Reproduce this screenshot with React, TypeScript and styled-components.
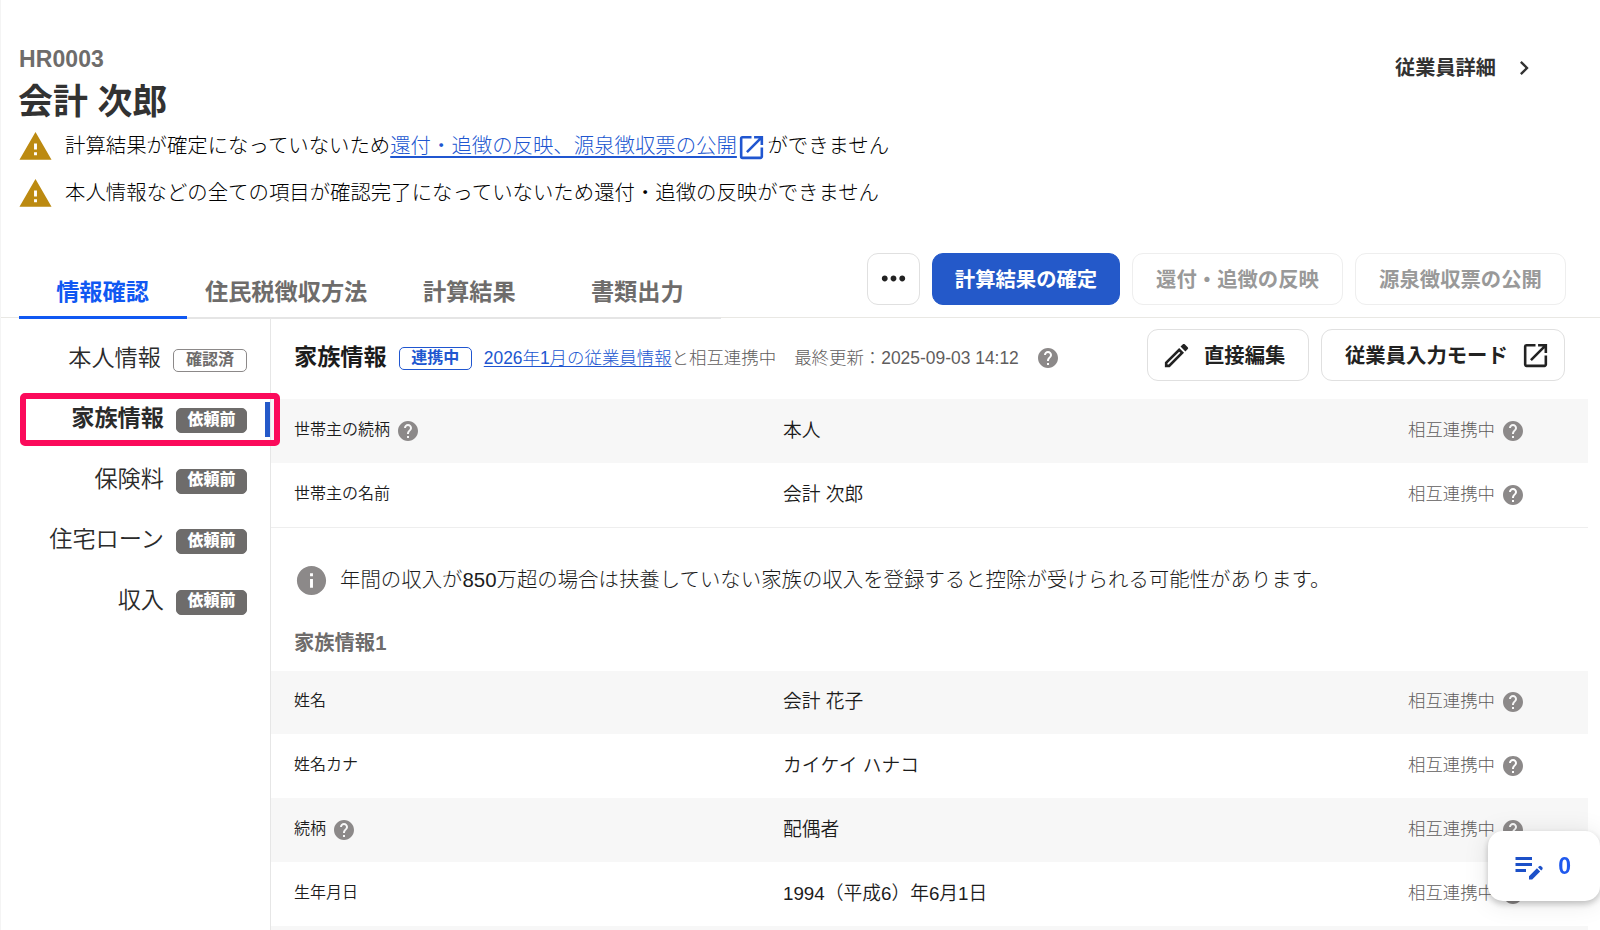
import React from "react";
import styled, { createGlobalStyle, css } from "styled-components";
import {
  MdChevronRight,
  MdEditNote,
  MdHelp,
  MdInfo,
  MdMoreHoriz,
  MdOpenInNew,
  MdOutlineEdit,
  MdWarning,
} from "react-icons/md";

const GlobalStyle = createGlobalStyle`
  *, *::before, *::after { box-sizing: border-box; }
  html, body { margin: 0; padding: 0; background: #fff; }
  body {
    font-family: "Liberation Sans", "Noto Sans CJK JP", sans-serif;
    color: #1c1c1c;
    overflow: hidden;
  }
  svg { display: block; flex-shrink: 0; }
`;

const Page = styled.div`
  width: 1600px;
  height: 930px;
  overflow: hidden;
  display: flex;
  flex-direction: column;
  border-left: 1px solid #f4f4f4;
`;

const Header = styled.header`
  height: 253px;
  flex-shrink: 0;
  padding: 45px 62px 0 18px;
  display: flex;
  justify-content: space-between;
  align-items: flex-start;
`;

const EmployeeCode = styled.div`
  font-size: 23px;
  line-height: 28px;
  font-weight: 700;
  letter-spacing: 0.1px;
  color: #6e6c6b;
`;

const EmployeeName = styled.h1`
  margin: 7px 0 0 -1px;
  font-size: 34.9px;
  line-height: 44px;
  font-weight: 700;
  color: #323232;
`;

const Alerts = styled.div`
  margin-top: -3px;
`;

const Alert = styled.div`
  display: flex;
  align-items: center;
  height: 47px;
  padding-bottom: 1px;
  font-size: 20.4px;
  font-weight: 300;
  color: #000;
  white-space: nowrap;
`;

const AlertIcon = styled(MdWarning)`
  margin: 4px 12px 0 -1px;
  color: #bc8a11;
`;

const Link = styled.a`
  color: #2056d0;
  text-decoration: underline;
  text-underline-offset: 3px;
`;

const AlertLink = styled(Link)`
  text-decoration-thickness: 2px;
`;

const LinkIcon = styled(MdOpenInNew)`
  margin: 6px 0 0 -0.5px;
  color: #2056d0;
`;

const DetailLink = styled.a`
  margin-top: 9px;
  display: flex;
  align-items: center;
  gap: 14px;
  font-size: 20.2px;
  line-height: 29px;
  font-weight: 700;
  color: #323232;
  svg { margin-top: -2px; }
`;

const TabBar = styled.div`
  height: 65px;
  flex-shrink: 0;
  padding: 0 34px 0 18px;
  display: flex;
  justify-content: space-between;
  align-items: flex-start;
  border-bottom: 1px solid #e9e8e4;
`;

const Tabs = styled.nav`
  display: flex;
  height: 66px;
  border-bottom: 2px solid #e5e5e5;
`;

const Tab = styled.div<{ $active?: boolean }>`
  min-width: 168px;
  height: 66px;
  padding: ${(p) => (p.$active ? "24px 18.5px 0 17.5px" : "24px 18px 0")};
  text-align: center;
  font-size: 23.2px;
  line-height: 30px;
  font-weight: 700;
  white-space: nowrap;
  color: ${(p) => (p.$active ? "#1058f2" : "#6e6c6b")};
  border-bottom: ${(p) => (p.$active ? "3px solid #1058f2" : "none")};
`;

const Actions = styled.div`
  display: flex;
  gap: 12px;
`;

const Button = styled.button<{ $variant?: "primary" | "disabled"; $width: number }>`
  width: ${(p) => p.$width}px;
  height: 52px;
  padding: 0 0 2px;
  display: flex;
  align-items: center;
  justify-content: center;
  border: 1px solid #e0e0e0;
  border-radius: 11px;
  background: #fff;
  color: #222;
  font-family: inherit;
  font-size: 20.35px;
  font-weight: 700;
  white-space: nowrap;
  ${(p) =>
    p.$variant === "primary" &&
    css`
      background: #2459c9;
      border-color: #2459c9;
      color: #fff;
    `}
  ${(p) =>
    p.$variant === "disabled" &&
    css`
      color: #999;
      border-color: #eee;
    `}
`;

const IconButton = styled(Button)<{ $indent: number }>`
  justify-content: flex-start;
  gap: 12px;
  padding-left: ${(p) => p.$indent}px;
  svg { margin-top: 2px; }
`;

const Body = styled.div`
  flex: 1;
  min-height: 0;
  display: flex;
`;

const Sidebar = styled.aside`
  width: 270px;
  flex-shrink: 0;
  padding-top: 9.3px;
  border-right: 1px solid #e6e6e6;
`;

const SideItem = styled.div<{ $active?: boolean }>`
  position: relative;
  height: 60.6px;
  padding-right: 23px;
  display: flex;
  align-items: center;
  justify-content: flex-end;
  gap: 12px;
  font-size: 23.2px;
  line-height: 30px;
  font-weight: ${(p) => (p.$active ? 700 : 350)};
  color: #2b2b2b;
`;

const ActiveMark = styled.div`
  position: absolute;
  right: 0;
  top: 14px;
  width: 5px;
  height: 35px;
  background: #2459c9;
`;

const Highlight = styled.div`
  position: absolute;
  left: 19px;
  top: 5px;
  width: 260px;
  height: 53px;
  border: 6px solid #fb0b5b;
  border-radius: 5px;
  z-index: 1;
`;

const badgeWidths = { done: 74, pending: 71, linked: 73 };

const Badge = styled.span<{ $tone: "done" | "pending" | "linked" }>`
  display: inline-flex;
  align-items: center;
  justify-content: center;
  flex-shrink: 0;
  width: ${(p) => badgeWidths[p.$tone]}px;
  height: ${(p) => (p.$tone === "pending" ? 25 : 23)}px;
  padding-bottom: ${(p) => (p.$tone === "pending" ? 2 : 1)}px;
  border-radius: 5px;
  border: 1px solid #8c8989;
  font-size: 16px;
  line-height: 20px;
  font-weight: 700;
  color: #6e6c6b;
  ${(p) =>
    p.$tone === "pending" &&
    css`
      background: #6e6c6b;
      border-color: #6e6c6b;
      color: #fff;
      font-weight: 900;
    `}
  ${(p) =>
    p.$tone === "linked" &&
    css`
      border-color: #2056d0;
      color: #2056d0;
    `}
`;

const SideBadge = styled(Badge)`
  margin-top: 5px;
`;

const Content = styled.main`
  width: 1317px;
  flex-shrink: 0;
`;

const ContentHeader = styled.div`
  height: 81px;
  padding: 11px 23px 0 23px;
  display: flex;
  justify-content: space-between;
`;

const ContentTitle = styled.div`
  height: 58px;
  display: flex;
  align-items: center;
  white-space: nowrap;
`;

const SectionName = styled.h2`
  margin: -2px 12px 0 0;
  font-size: 23.2px;
  line-height: 30px;
  font-weight: 700;
`;

const Meta = styled.span<{ $gap: number }>`
  margin-left: ${(p) => p.$gap}px;
  font-size: 17.43px;
  line-height: 24px;
  font-weight: 300;
  color: #5f5d5d;
`;

const MetaLink = styled(Link)`
  text-underline-offset: 2px;
`;

const HelpIcon = styled(MdHelp)`
  color: #8c8989;
`;

const MetaHelp = styled(HelpIcon)`
  margin-left: 17px;
`;

const Row = styled.div<{ $shaded?: boolean }>`
  height: 63.8px;
  padding: 0 63px 0 23px;
  display: grid;
  grid-template-columns: 489px 1fr auto;
  align-items: center;
  background: ${(p) => (p.$shaded ? "#f7f7f7" : "#fff")};
`;

const FieldText = styled.span`
  line-height: 24px;
  margin-top: -2px;
`;

const RowLabel = styled.div`
  display: flex;
  align-items: center;
  gap: 6px;
  height: 24px;
  font-size: 16px;
  font-weight: 350;
`;

const RowValue = styled.div`
  font-size: 18.75px;
  line-height: 26px;
  font-weight: 350;
`;

const RowStatus = styled.div`
  display: flex;
  align-items: center;
  gap: 6px;
  height: 24px;
  font-size: 17.4px;
  font-weight: 300;
  color: #5f5d5d;
`;

const Notice = styled.div`
  height: 104px;
  padding-left: 23px;
  display: flex;
  align-items: center;
  gap: 11px;
  border-top: 1px solid #eee;
  font-size: 20.42px;
  line-height: 30px;
  font-weight: 300;
  white-space: nowrap;
`;

const NoticeText = styled.span`
  margin-top: 1px;
`;

const NoticeIcon = styled(MdInfo)`
  margin-top: 3px;
  color: #8c8989;
`;

const GroupTitle = styled.h3`
  margin: 0;
  height: 40px;
  padding-left: 23px;
  font-size: 20.3px;
  line-height: 24px;
  font-weight: 700;
  color: #6e6c6b;
`;

const FloatingCounter = styled.div`
  position: fixed;
  left: 1488px;
  top: 831px;
  width: 112px;
  height: 70px;
  padding: 0 29px 0 23px;
  display: flex;
  align-items: center;
  justify-content: space-between;
  border-radius: 15px;
  background: #fff;
  box-shadow: 0 3px 6px rgba(0, 0, 0, 0.22), 0 2px 26px rgba(0, 0, 0, 0.1);
  color: #1f59ee;
  font-size: 23px;
  font-weight: 700;
`;

const NoteIcon = styled(MdEditNote)`
  color: #1c50c8;
`;

const PENDING = "依頼前";

const sideItems = [
  { label: "本人情報", status: "確認済" },
  { label: "家族情報", status: PENDING, active: true },
  { label: "保険料", status: PENDING },
  { label: "住宅ローン", status: PENDING },
  { label: "収入", status: PENDING },
];

type Field = { label: string; value: string; help?: boolean };

const householdFields: Field[] = [
  { label: "世帯主の続柄", value: "本人", help: true },
  { label: "世帯主の名前", value: "会計 次郎" },
];

const familyFields: Field[] = [
  { label: "姓名", value: "会計 花子" },
  { label: "姓名カナ", value: "カイケイ ハナコ" },
  { label: "続柄", value: "配偶者", help: true },
  { label: "生年月日", value: "1994（平成6）年6月1日" },
];

function FieldRows({ fields }: { fields: Field[] }) {
  return (
    <>
      {fields.map((f, i) => (
        <Row key={f.label} $shaded={i % 2 === 0}>
          <RowLabel>
            <FieldText>{f.label}</FieldText>
            {f.help && <HelpIcon size={24} />}
          </RowLabel>
          <RowValue>{f.value}</RowValue>
          <RowStatus>
            <FieldText>相互連携中</FieldText>
            <HelpIcon size={24} />
          </RowStatus>
        </Row>
      ))}
    </>
  );
}

export default function App() {
  return (
    <>
      <GlobalStyle />
      <Page>
        <Header>
          <div>
            <EmployeeCode>HR0003</EmployeeCode>
            <EmployeeName>会計 次郎</EmployeeName>
            <Alerts>
              <Alert>
                <AlertIcon size={35} />
                計算結果が確定になっていないため
                <AlertLink>還付・追徴の反映、源泉徴収票の公開</AlertLink>
                <LinkIcon size={31} />
                ができません
              </Alert>
              <Alert>
                <AlertIcon size={35} />
                本人情報などの全ての項目が確認完了になっていないため還付・追徴の反映ができません
              </Alert>
            </Alerts>
          </div>
          <DetailLink>
            従業員詳細
            <MdChevronRight size={28} />
          </DetailLink>
        </Header>

        <TabBar>
          <Tabs>
            <Tab $active>情報確認</Tab>
            <Tab>住民税徴収方法</Tab>
            <Tab>計算結果</Tab>
            <Tab>書類出力</Tab>
          </Tabs>
          <Actions>
            <Button $width={53}>
              <MdMoreHoriz size={35} />
            </Button>
            <Button $variant="primary" $width={188}>計算結果の確定</Button>
            <Button $variant="disabled" $width={211}>還付・追徴の反映</Button>
            <Button $variant="disabled" $width={211}>源泉徴収票の公開</Button>
          </Actions>
        </TabBar>

        <Body>
          <Sidebar>
            {sideItems.map((item) => (
              <SideItem key={item.label} $active={item.active}>
                {item.label}
                <SideBadge $tone={item.status === PENDING ? "pending" : "done"}>{item.status}</SideBadge>
                {item.active && <ActiveMark />}
                {item.active && <Highlight />}
              </SideItem>
            ))}
          </Sidebar>

          <Content>
            <ContentHeader>
              <ContentTitle>
                <SectionName>家族情報</SectionName>
                <Badge $tone="linked">連携中</Badge>
                <Meta $gap={12}>
                  <MetaLink>2026年1月の従業員情報</MetaLink>
                  と相互連携中
                </Meta>
                <Meta $gap={18}>最終更新：2025-09-03 14:12</Meta>
                <MetaHelp size={24} />
              </ContentTitle>
              <Actions>
                <IconButton $width={162} $indent={13}>
                  <MdOutlineEdit size={31} />
                  直接編集
                </IconButton>
                <IconButton $width={244} $indent={23}>
                  従業員入力モード
                  <MdOpenInNew size={31} />
                </IconButton>
              </Actions>
            </ContentHeader>

            <FieldRows fields={householdFields} />
            <Notice>
              <NoticeIcon size={35} />
              <NoticeText>
                年間の収入が850万超の場合は扶養していない家族の収入を登録すると控除が受けられる可能性があります。
              </NoticeText>
            </Notice>
            <GroupTitle>家族情報1</GroupTitle>
            <FieldRows fields={familyFields} />
            <Row $shaded />
          </Content>
        </Body>

        <FloatingCounter>
          <NoteIcon size={36} />
          <span>0</span>
        </FloatingCounter>
      </Page>
    </>
  );
}
